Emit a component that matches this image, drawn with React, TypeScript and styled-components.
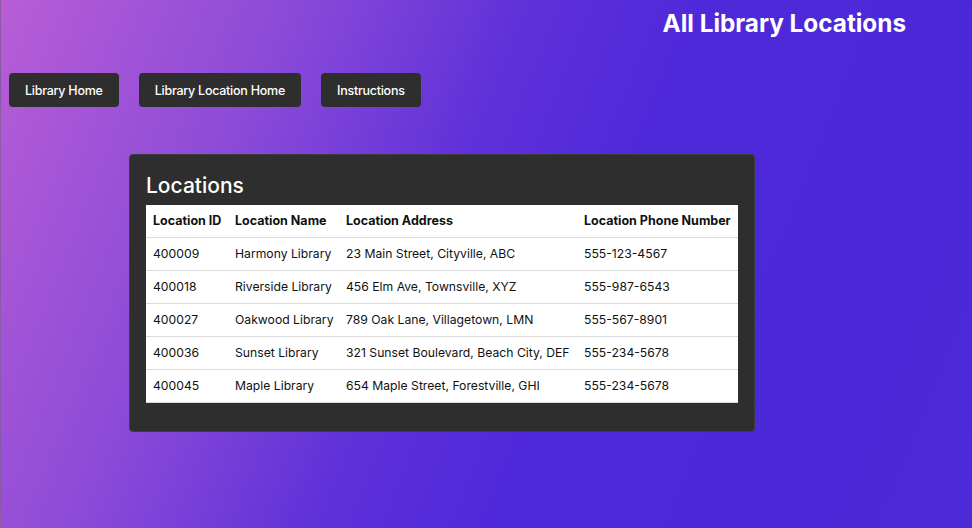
import styled, { createGlobalStyle } from "styled-components";

const GlobalStyle = createGlobalStyle`
  html, body {
    margin: 0;
    padding: 0;
  }
  body {
    font-family: Inter, "Liberation Sans", sans-serif;
  }
`;

const PageContainer = styled.div`
  display: flex;
  flex-direction: column;
  width: 100%;
  min-height: 528px;
  box-sizing: border-box;
  border-left: 1px solid #8a5aa6;
  background: linear-gradient(112deg, #b85dd6 0%, #8a4ad8 25%, #5f30d9 45%, #4e29d9 60%, #4a28d8 80%, #4c2ad6 100%);
`;

const Header = styled.div`
  display: flex;
  justify-content: flex-end;
  padding: 8px 66px 0 0;
  height: 35px;
`;

const Title = styled.h1`
  margin: 0;
  font-size: 24.3px;
  font-weight: 700;
  color: #fff;
`;

const NavBar = styled.nav`
  display: flex;
  gap: 20px;
  padding: 30px 0 0 8px;
`;

const NavButton = styled.button`
  height: 34px;
  padding: 0 16px;
  border: none;
  border-radius: 4px;
  background-color: #2e2e2e;
  color: #fff;
  font-family: Inter, "Liberation Sans", sans-serif;
  font-size: 12.5px;
  letter-spacing: -0.25px;
  font-weight: 500;
  cursor: pointer;
`;

const Card = styled.div`
  display: flex;
  flex-direction: column;
  align-self: flex-start;
  margin: 47px 0 0 128px;
  padding: 18px 16px 28px 16px;
  background-color: #2e2e2e;
  border: 1px solid #3c3c3c;
  border-radius: 4px;
`;

const CardTitle = styled.h2`
  margin: 0 0 7px 0;
  font-size: 21px;
  font-weight: 500;
  color: #fff;
  line-height: 25px;
`;

const Table = styled.table`
  width: 592px;
  table-layout: fixed;
  border-collapse: collapse;
  background-color: #fff;
  border-bottom: 1px solid #dcdcdc;
  color: #111;
  font-size: 12.2px;
`;

const HeadCell = styled.th<{ $width: number }>`
  width: ${(p) => p.$width}px;
  box-sizing: border-box;
  height: 32px;
  padding: 0 4px 0 7px;
  text-align: left;
  font-size: 12.5px;
  font-weight: 700;
  white-space: nowrap;
`;

const Row = styled.tr`
  border-top: 1px solid #dcdcdc;
`;

const Cell = styled.td`
  height: 32px;
  padding: 0 4px 0 7px;
  white-space: nowrap;
`;

const columns = [
  { label: "Location ID", width: 82 },
  { label: "Location Name", width: 111 },
  { label: "Location Address", width: 238 },
  { label: "Location Phone Number", width: 161 },
];

const locations = [
  { id: "400009", name: "Harmony Library", address: "23 Main Street, Cityville, ABC", phone: "555-123-4567" },
  { id: "400018", name: "Riverside Library", address: "456 Elm Ave, Townsville, XYZ", phone: "555-987-6543" },
  { id: "400027", name: "Oakwood Library", address: "789 Oak Lane, Villagetown, LMN", phone: "555-567-8901" },
  { id: "400036", name: "Sunset Library", address: "321 Sunset Boulevard, Beach City, DEF", phone: "555-234-5678" },
  { id: "400045", name: "Maple Library", address: "654 Maple Street, Forestville, GHI", phone: "555-234-5678" },
];

function App() {
  return (
    <PageContainer>
      <GlobalStyle />
      <Header>
        <Title>All Library Locations</Title>
      </Header>
      <NavBar>
        <NavButton>Library Home</NavButton>
        <NavButton>Library Location Home</NavButton>
        <NavButton>Instructions</NavButton>
      </NavBar>
      <Card>
        <CardTitle>Locations</CardTitle>
        <Table>
          <thead>
            <tr>
              {columns.map((c) => (
                <HeadCell key={c.label} $width={c.width}>
                  {c.label}
                </HeadCell>
              ))}
            </tr>
          </thead>
          <tbody>
            {locations.map((l) => (
              <Row key={l.id}>
                <Cell>{l.id}</Cell>
                <Cell>{l.name}</Cell>
                <Cell>{l.address}</Cell>
                <Cell>{l.phone}</Cell>
              </Row>
            ))}
          </tbody>
        </Table>
      </Card>
    </PageContainer>
  );
}

export default App;
